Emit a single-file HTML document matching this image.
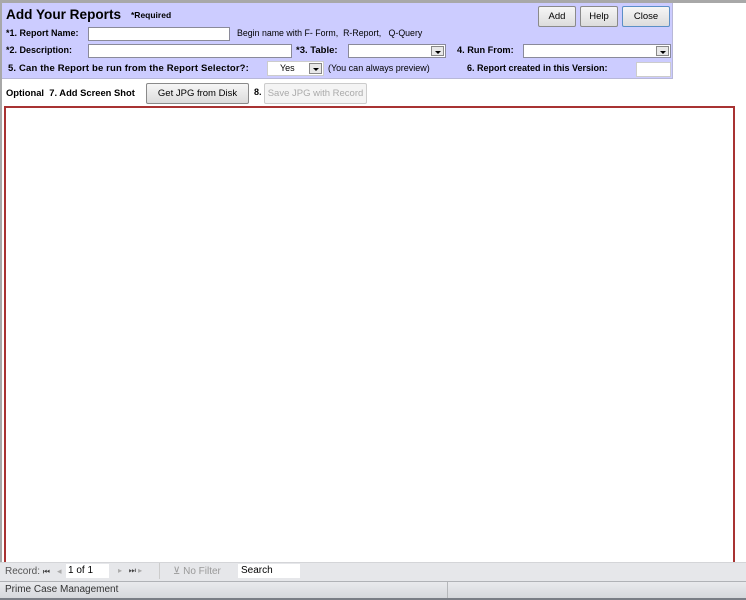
<!DOCTYPE html>
<html><head><style>
*{margin:0;padding:0;box-sizing:border-box}
body{width:746px;height:600px;overflow:hidden;background:#fff;font-family:"Liberation Sans",Arial,sans-serif;font-size:9px;color:#000;position:relative}
.a{position:absolute;white-space:nowrap}
.b{font-weight:bold}
.in{position:absolute;background:#fff;border:1px solid #8a8a9a}
.dd{position:absolute;right:1px;top:1px;bottom:1px;width:13px;background:#e8e8e8;border:1px solid #888}
.dd:after{content:"";position:absolute;left:3px;top:4px;border-left:3px solid transparent;border-right:3px solid transparent;border-top:3px solid #000}
.btn{position:absolute;border:1px solid #8a8a8a;border-radius:2px;background:linear-gradient(#f6f6f6,#dcdcdc);text-align:center;font-size:9.5px}
</style></head><body>
<div class="a" style="left:0;top:0;width:746px;height:3px;background:#a8a8a8"></div>
<div class="a" style="left:0;top:0;width:2px;height:562px;background:#a8a8a8"></div>
<div class="a" style="left:2px;top:3px;width:671px;height:76px;background:#ccccff;border-right:1px solid #b8b8d8;border-bottom:1px solid #b8b8d8"></div>
<div class="a b" style="left:6px;top:7px;font-size:13.6px">Add Your Reports</div>
<div class="a b" style="left:131px;top:10px;font-size:8.5px">*Required</div>
<div class="btn" style="left:538px;top:6px;width:38px;height:21px;line-height:19px">Add</div>
<div class="btn" style="left:580px;top:6px;width:38px;height:21px;line-height:19px">Help</div>
<div class="btn" style="left:622px;top:6px;width:48px;height:21px;line-height:19px;border-color:#5b8fc7">Close</div>

<div class="a b" style="left:6px;top:28px">*1. Report Name:</div>
<div class="in" style="left:88px;top:27px;width:142px;height:14px"></div>
<div class="a" style="left:237px;top:28px;font-size:8.8px">Begin name with F- Form,&nbsp; R-Report,&nbsp;&nbsp; Q-Query</div>

<div class="a b" style="left:6px;top:45px">*2. Description:</div>
<div class="in" style="left:88px;top:44px;width:204px;height:14px"></div>
<div class="a b" style="left:296px;top:45px;font-size:9.5px">*3. Table:</div>
<div class="in" style="left:348px;top:44px;width:98px;height:14px"><div class="dd"></div></div>
<div class="a b" style="left:457px;top:45px;font-size:9.2px">4. Run From:</div>
<div class="in" style="left:523px;top:44px;width:148px;height:14px"><div class="dd"></div></div>

<div class="a b" style="left:8px;top:63px;font-size:9.5px;letter-spacing:0.15px">5. Can the Report be run from the Report Selector?:</div>
<div class="in" style="left:267px;top:61px;width:57px;height:15px;border-color:#ccc"><span style="position:absolute;left:12px;top:1px">Yes</span><div class="dd"></div></div>
<div class="a" style="left:328px;top:63px">(You can always preview)</div>
<div class="a b" style="left:467px;top:63px;font-size:9px">6. Report created in this Version:</div>
<div class="in" style="left:636px;top:62px;width:35px;height:15px;border-color:#ccc"></div>

<div class="a b" style="left:6px;top:87px;font-size:9.4px">Optional&nbsp; 7. Add Screen Shot</div>
<div class="btn" style="left:146px;top:83px;width:103px;height:21px;line-height:19px">Get JPG from Disk</div>
<div class="a b" style="left:254px;top:87px">8.</div>
<div class="btn" style="left:264px;top:83px;width:103px;height:21px;line-height:19px;color:#aaa;border-color:#ccc;background:#f4f4f4">Save JPG with Record</div>

<div class="a" style="left:4px;top:106px;width:731px;height:458px;border:2px solid #a83232;border-bottom:none"></div>

<div class="a" style="left:0;top:562px;width:746px;height:19px;background:#e6e7ea;border-top:1px solid #d4d5d8"></div>
<div class="a" style="left:5px;top:566px;color:#555;font-size:10px">Record: <span style="font-size:8px;color:#333">⏮</span></div>
<div class="a" style="left:57px;top:566px;color:#aaa">◂</div>
<div class="a" style="left:66px;top:564px;width:43px;height:14px;background:#fff;padding-left:2px;line-height:14px;font-size:10px">1 of 1</div>
<div class="a" style="left:118px;top:566px;color:#aaa;font-size:8px">▸&nbsp;&nbsp; <span style="color:#444">⏭</span> ▸</div>
<div class="a" style="left:159px;top:563px;width:1px;height:16px;background:#ccc"></div>
<div class="a" style="left:173px;top:566px;color:#999;font-size:10px">⊻ No Filter</div>
<div class="a" style="left:238px;top:564px;width:62px;height:14px;background:#fff;padding-left:3px;line-height:14px;font-size:10px">Search</div>

<div class="a" style="left:0;top:581px;width:746px;height:17px;background:linear-gradient(#e9eaed,#d6d8dc);border-top:1px solid #b0b2b6"></div>
<div class="a" style="left:5px;top:584px;color:#333;font-size:10px">Prime Case Management</div>
<div class="a" style="left:447px;top:582px;width:1px;height:16px;background:#b5b7ba"></div>
<div class="a" style="left:0;top:598px;width:746px;height:2px;background:#7a7e86"></div>
</body></html>
